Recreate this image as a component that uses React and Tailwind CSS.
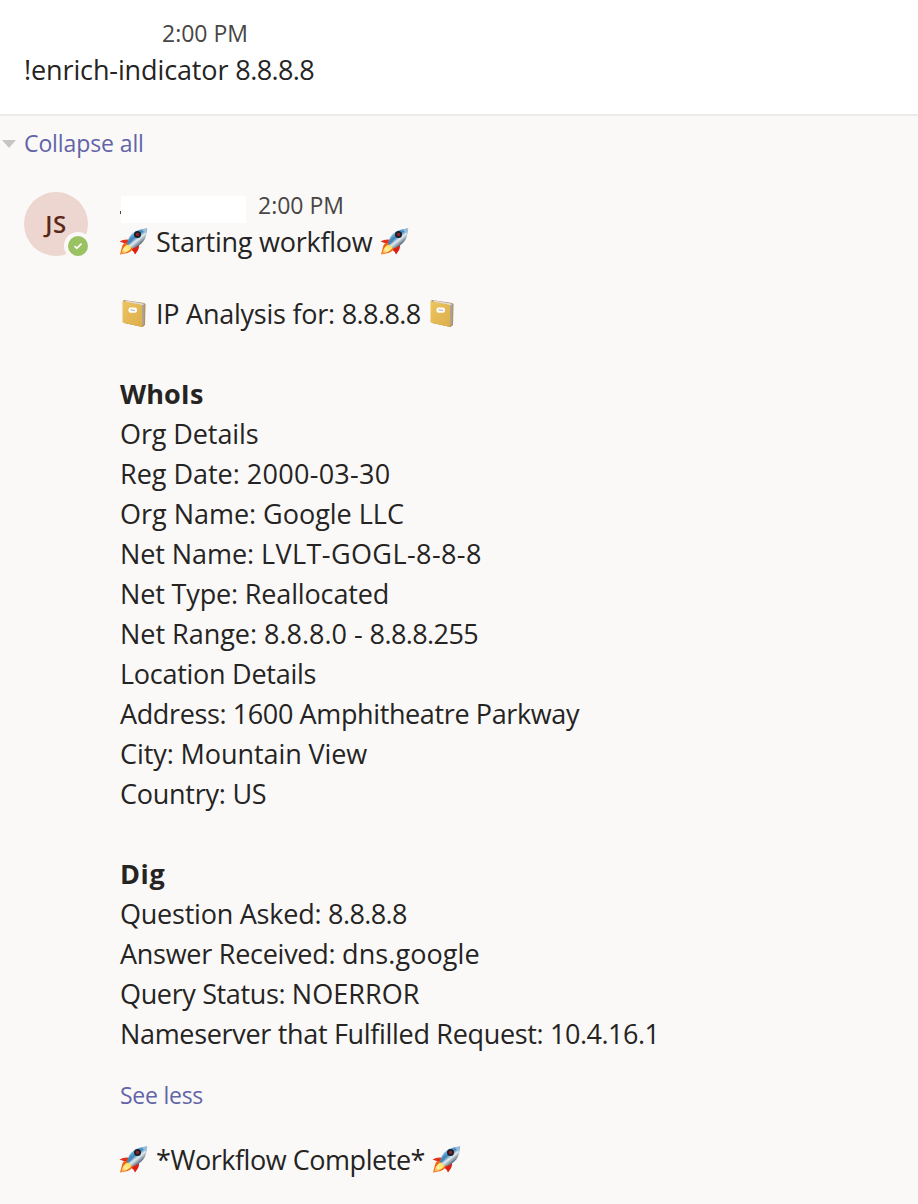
function T({ c = '', children }) {
  return <div className={`whitespace-pre ${c}`}>{children}</div>;
}

function Rocket() {
  return (
    <svg viewBox="0 0 28 28" className="h-7 w-[29px] shrink-0">
      <defs>
        <linearGradient id="hull" x1=".3" y1=".2" x2=".75" y2=".75">
          <stop offset="0" stopColor="#7db9e2" />
          <stop offset=".35" stopColor="#3f86bd" />
          <stop offset=".6" stopColor="#e3ecf0" />
          <stop offset="1" stopColor="#465b6c" />
        </linearGradient>
        <linearGradient id="fire" x1="1" y1="0" x2="0" y2="1">
          <stop offset="0" stopColor="#ffd84a" />
          <stop offset=".6" stopColor="#fff09a" />
          <stop offset="1" stopColor="#f58a1c" />
        </linearGradient>
      </defs>
      <path d="M0 13.500 Q5 10.500 11.500 12 L8 17.500 Q4 14.500 0 13.500Z" fill="#e6301a" />
      <path d="M13 19 L19 15.500 Q21 20 15.500 26.500 Q14.500 23.500 11 21Z" fill="#dd1f13" />
      <path d="M7 15 Q3 15 2.500 19 L.5 26.500 L8 25 Q13 23 13.500 19.500Z" fill="#ef6a17" />
      <path d="M8 16.500 Q12 17 12 20 Q9 24 1.500 26 Q3 19 8 16.500Z" fill="url(#fire)" />
      <path d="M7.500 15.500 C9.500 6 16 1 27.700 .5 C27 11 23 17.500 13 20.500Z" fill="url(#hull)" />
      <path d="M22 1.500 L27.700 .5 L26.800 6Z" fill="#9abdd6" />
      <circle cx="18" cy="6.600" r="3.500" fill="#191f27" />
      <circle cx="18" cy="6.400" r="1.600" fill="#9c2027" />
      <path d="M8 17 Q13 14 14.500 9.500 L12 9.500 Q9 12 7.500 15.500Z" fill="#4c86b4" />
    </svg>
  );
}

function Book() {
  return (
    <svg viewBox="0 0 28 28" className="h-7 w-7 shrink-0">
      <defs>
        <linearGradient id="cover" x1="0" y1="0" x2="1" y2="1">
          <stop offset="0" stopColor="#edc55f" />
          <stop offset="1" stopColor="#dcae4b" />
        </linearGradient>
      </defs>
      <path d="M3.500 0 L24 3 L25.500 4 L25 25 L22.500 27 L4 23Z" fill="#a98344" />
      <path d="M5 .3 L24.500 3.700 L23 5.500 L6 2.500Z" fill="#dcdcdd" />
      <path d="M22 5.500 L24.700 4 L24.500 24.500 L22 26Z" fill="#aaa294" />
      <path d="M2.500 1 L22 5 L22.300 27 L2.500 22.500Z" fill="url(#cover)" />
      <rect x="8.500" y="7.500" width="8.500" height="5.300" rx="2" fill="#fff" />
      <path d="M10.500 9.800 L15 10.500" stroke="#aaa" />
    </svg>
  );
}

const ipTracking = 'tracking-[-0.6px]';

const whois = [
  ['Org Details', 'tracking-[-0.1px]'],
  ['Reg Date: ', 'tracking-[-0.02px]', '2000-03-30', 'tracking-[0.28px]'],
  ['Org Name: Google LLC', 'tracking-[-0.02px]'],
  ['Net Name: ', 'tracking-[-0.08px]', 'LVLT-GOGL-8-8-8', 'tracking-[0.42px]'],
  ['Net Type: Reallocated', 'tracking-[-0.15px]'],
  ['Net Range: 8.8.8.0 - ', 'tracking-[-0.02px]', '8.8.8.255', ipTracking],
  ['Location Details', 'tracking-[-0.27px]'],
  ['Address: 1600 Amphitheatre Parkway', 'tracking-[-0.38px]'],
  ['City: Mountain View', 'tracking-[-0.08px]'],
  ['Country: US', 'tracking-[-0.25px]'],
];
const dig = [
  ['Question Asked: ', 'tracking-[-0.23px]', '8.8.8.8', ipTracking],
  ['Answer Received: ', 'tracking-[-0.27px]', 'dns.google', 'tracking-[0.08px]'],
  ['Query Status: ', 'tracking-[-0.36px]', 'NOERROR', 'tracking-[0.05px]'],
  ['Nameserver that Fulfilled Request: ', 'tracking-[-0.32px]', '10.4.16.1', 'tracking-[-0.5px]'],
];

function Line({ row: [text, tracking, value, valueTracking] }) {
  return (
    <T c={tracking}>
      {text}
      {value && <span className={valueTracking}>{value}</span>}
    </T>
  );
}

export default function App() {
  return (
    <div className="h-[1204px] w-[918px] overflow-hidden bg-[#faf9f8] font-['Open_Sans',sans-serif] text-[27px] leading-[40px] text-[#252423]">
      <header className="h-[116px] border-b-2 border-[#edebe9] bg-white pl-6 pt-[17px]">
        <T c="mb-px pl-[138px] text-[23px] leading-8 text-[#484644]">2:00 PM</T>
        <Line row={['!enrich-indicator ', 'tracking-[-0.12px]', '8.8.8.8', ipTracking]} />
      </header>
      <div className="flex h-[55px] items-center gap-2 pl-[2px] text-[23px] text-[#6264a7]">
        <svg viewBox="0 0 14 8" className="h-2 w-3.5"><path d="M0 0H14L7 8Z" fill="#c8c6c4" /></svg>
        <T c="pb-0.5 tracking-[-0.1px]">Collapse all</T>
      </div>
      <main className="flex pl-6 pt-[21px]">
        <div className="relative h-16 w-16 rounded-full bg-[#edd6cf] text-center text-[24px] font-semibold leading-[63px] tracking-[0.5px] text-[#5a2718]">
          JS
          <svg viewBox="0 0 28 28" className="absolute left-10 top-10 h-7 w-7">
            <circle cx="14" cy="14" r="14" fill="#faf9f8" />
            <circle cx="14" cy="14" r="10" fill="#9ac162" />
            <path d="M10.500 14 L12.800 16.300 L17.500 11.600" fill="none" stroke="#fff" strokeWidth="1.700" />
          </svg>
        </div>
        <div className="pl-8">
          <div className="flex h-[30px] text-[23px] leading-[27px] text-[#484644]">
            <div className="mt-[19px] h-[3px] w-px bg-[#484644]" />
            <div className="mr-3 mt-1 h-[27px] w-[125px] bg-white" />
            <T>2:00 PM</T>
          </div>
          <div className="-ml-px flex items-center">
            <Rocket />
            <T c="ml-2 mr-[7px] tracking-[-0.24px]">Starting workflow</T>
            <Rocket />
          </div>
          <div className="mt-8 flex items-center">
            <Book />
            <div className="ml-2 mr-[7px]">
              <Line row={['IP Analysis for: ', 'tracking-[-0.24px]', '8.8.8.8', ipTracking]} />
            </div>
            <Book />
          </div>
          <T c="mt-10 font-bold tracking-[0.1px]">WhoIs</T>
          {whois.map((r) => <Line key={r[0]} row={r} />)}
          <T c="mt-10 font-bold tracking-[0.6px]">Dig</T>
          {dig.map((r) => <Line key={r[0]} row={r} />)}
          <T c="mt-[21px] text-[23px] tracking-[-0.25px] text-[#6264a7]">See less</T>
          <div className="-ml-px mt-[25px] flex items-center">
            <Rocket />
            <T c="ml-2 mr-[7px] tracking-[-0.46px]">*Workflow Complete*</T>
            <Rocket />
          </div>
        </div>
      </main>
    </div>
  );
}
